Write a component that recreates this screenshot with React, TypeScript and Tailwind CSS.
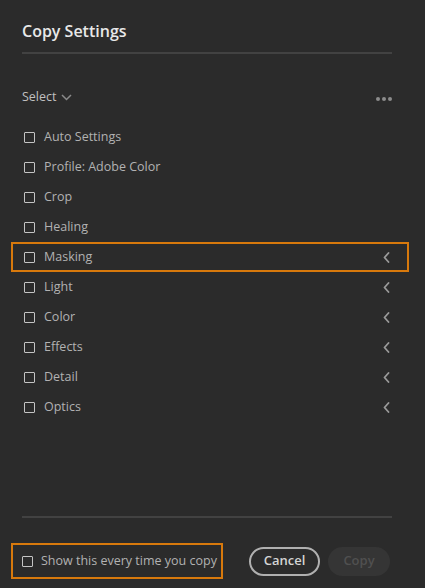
import React from "react";

const items = [
  { label: "Auto Settings", sub: false },
  { label: "Profile: Adobe Color", sub: false },
  { label: "Crop", sub: false },
  { label: "Healing", sub: false },
  { label: "Masking", sub: true, active: true },
  { label: "Light", sub: true },
  { label: "Color", sub: true },
  { label: "Effects", sub: true },
  { label: "Detail", sub: true },
  { label: "Optics", sub: true },
];

function Box() {
  return <span className="block w-[11px] h-[11px] border-[1.5px] border-[#c4c4c4] rounded-[1px] shrink-0" />;
}

function Chevron() {
  return (
    <svg width="7" height="11" viewBox="0 0 7 11" className="shrink-0">
      <path d="M5.5 1 L1.5 5.5 L5.5 10" stroke="#9a9a9a" strokeWidth="1.8" fill="none" strokeLinecap="round" strokeLinejoin="round" />
    </svg>
  );
}

export default function App() {
  return (
    <div
      className="w-[425px] h-[588px] bg-[#2b2b2b] flex flex-col text-[#b2b2b2]"
      style={{ fontFamily: '"Open Sans", "Liberation Sans", sans-serif' }}
    >
      <div className="pl-[22px] pr-[33px] pt-[19px]">
        <h1 className="text-[16px] leading-[24px] font-semibold text-[#e8e8e8]">Copy Settings</h1>
        <div className="mt-[9px] h-[2px] bg-[#424242]" />
      </div>

      <div className="pl-[22px] pr-[33px] mt-[33px] h-[20px] flex items-center justify-between">
        <div className="flex items-center gap-[4px] text-[12.5px] text-[#c0c0c0]">
          <span>Select</span>
          <svg width="11" height="7" viewBox="0 0 11 7">
            <path d="M1 1 L5.5 5.5 L10 1" stroke="#8a8a8a" strokeWidth="1.5" fill="none" />
          </svg>
        </div>
        <div className="flex gap-[2px] mt-[3px]">
          <span className="w-[4px] h-[4px] rounded-full bg-[#8c8c8c]" />
          <span className="w-[4px] h-[4px] rounded-full bg-[#8c8c8c]" />
          <span className="w-[4px] h-[4px] rounded-full bg-[#8c8c8c]" />
        </div>
      </div>

      <div className="flex-1 pl-[11px] pr-[16px] mt-[15px]">
        {items.map((it) => (
          <div
            key={it.label}
            className={
              "h-[30px] flex items-center pl-[11px] pr-[17px] border-2 " +
              (it.active ? "border-[#d8790c]" : "border-transparent")
            }
          >
            <Box />
            <span className="ml-[9px] text-[12.5px] flex-1">{it.label}</span>
            {it.sub && <Chevron />}
          </div>
        ))}
      </div>

      <div className="pl-[22px] pr-[33px]">
        <div className="h-[2px] bg-[#424242]" />
      </div>

      <div className="flex items-center pl-[11px] mt-[25px] mb-[9px]">
        <div className="h-[36px] w-[212px] border-2 border-[#d8790c] flex items-center pl-[9px]">
          <Box />
          <span className="ml-[8px] text-[12.5px] text-[#b2b2b2] whitespace-nowrap">Show this every time you copy</span>
        </div>
        <button className="ml-[26px] h-[29px] w-[71px] rounded-full border-2 border-[#b0b0b0] text-[13px] font-semibold text-[#d4d4d4]">
          Cancel
        </button>
        <button className="ml-[8px] h-[29px] w-[62px] rounded-full bg-[#353535] text-[13px] font-semibold text-[#505050]">
          Copy
        </button>
      </div>
    </div>
  );
}
